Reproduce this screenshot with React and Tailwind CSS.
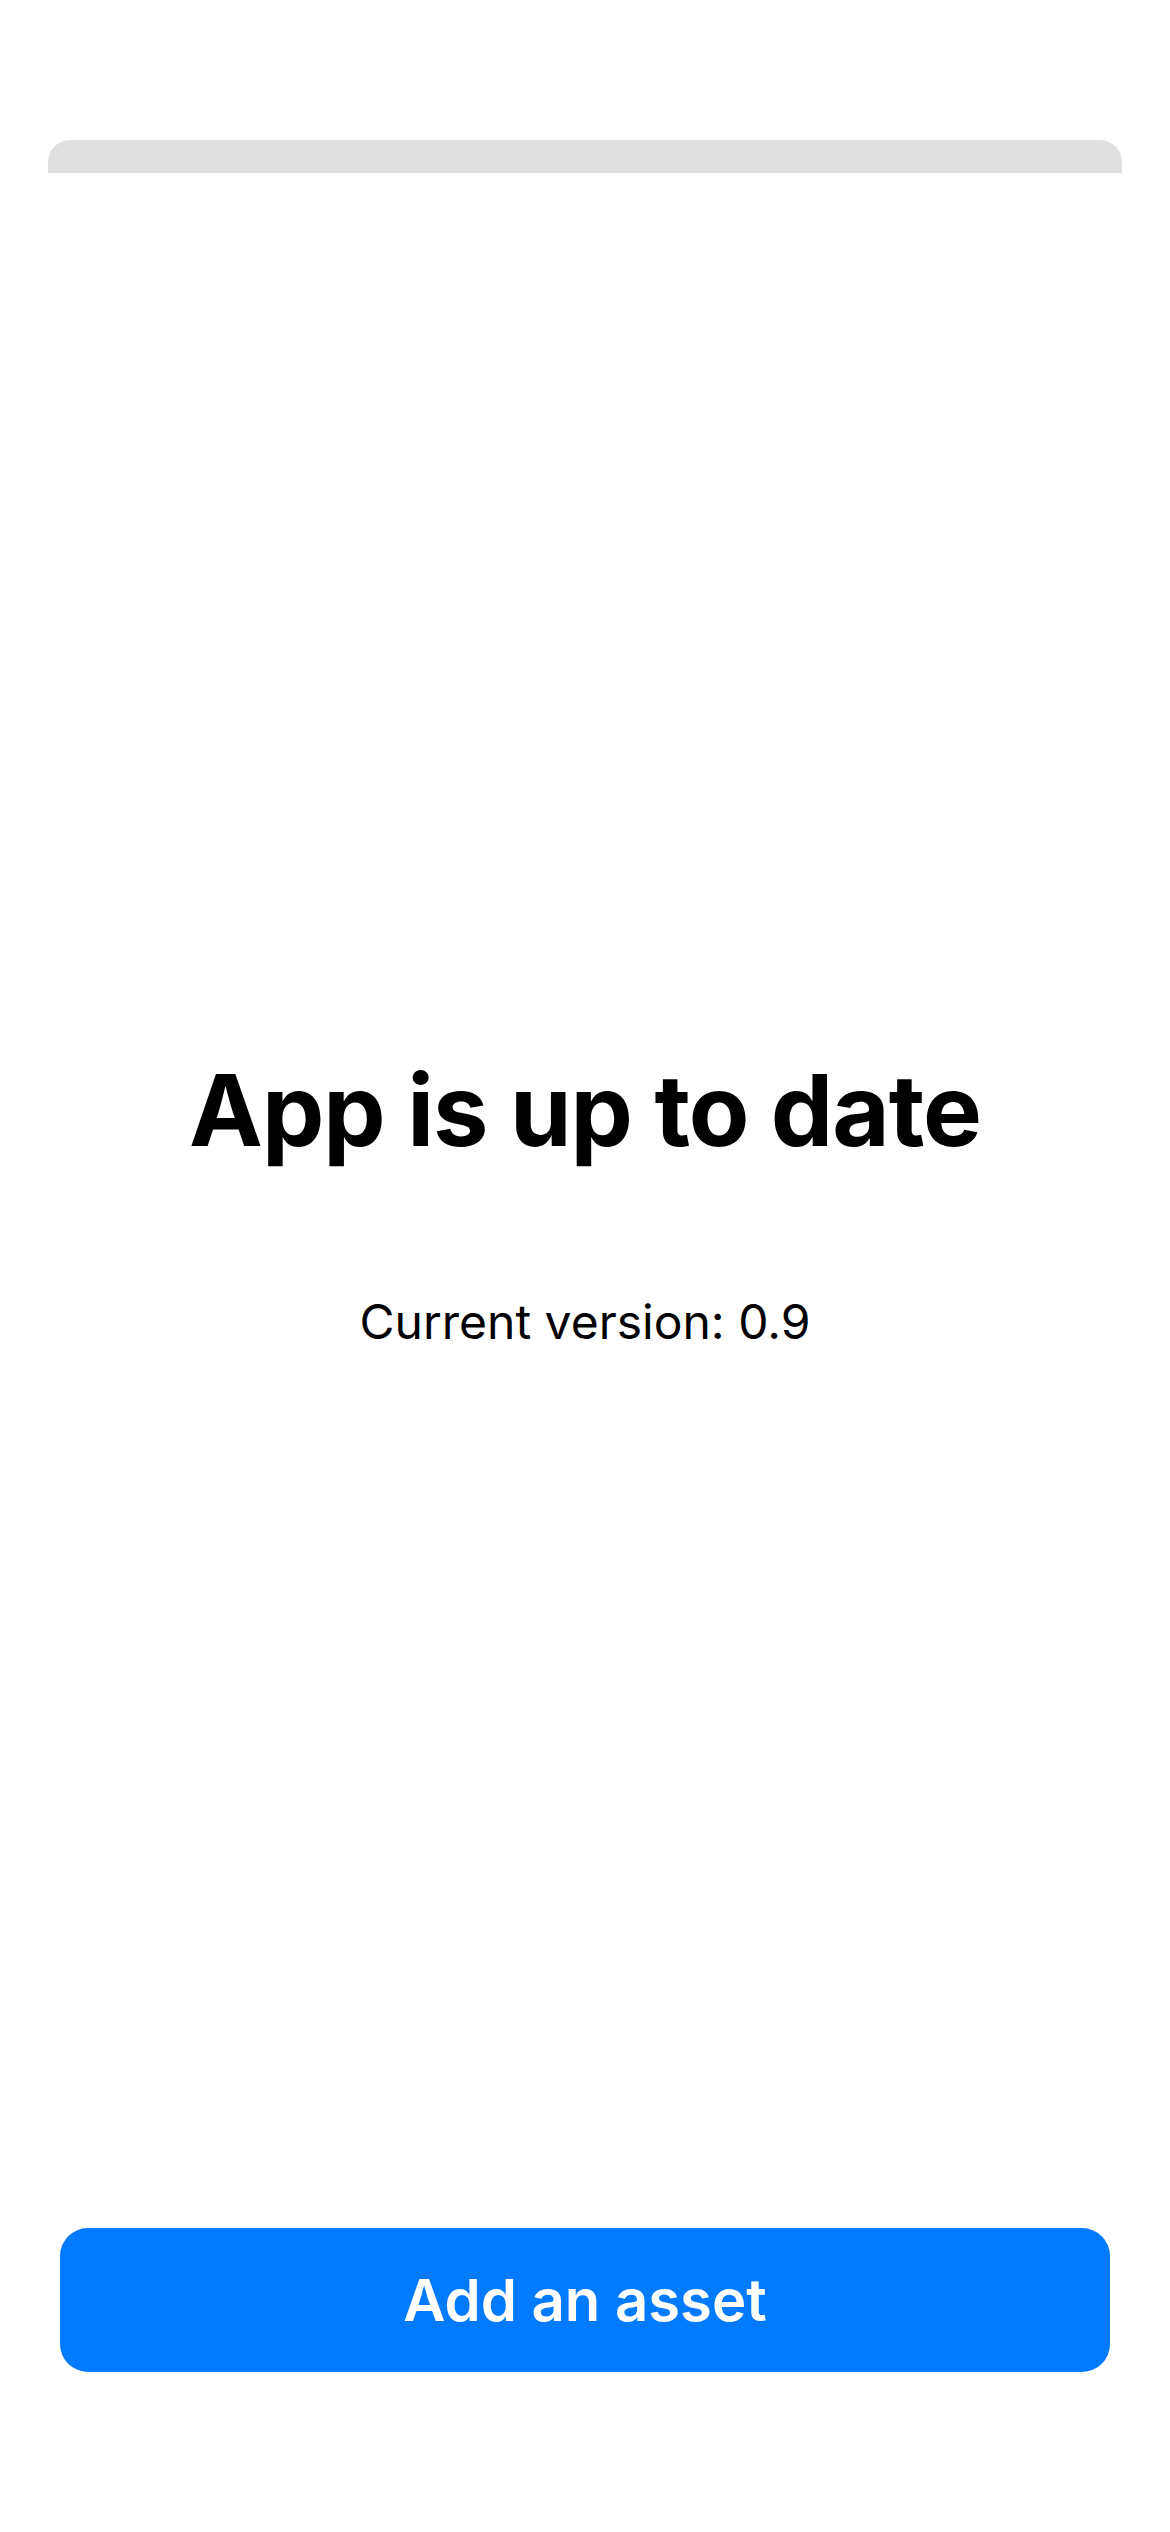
export default function App() {
  return (
    <div className="w-[1170px] h-[2532px] bg-white flex flex-col font-['Inter','Noto_Sans',sans-serif] text-black">
      {/* Peeking sheet edge */}
      <div className="mt-[140px] mx-[48px] h-[33px] bg-[#e0e0e0] rounded-t-[22px]" />

      {/* Status */}
      <h1 className="mt-[888px] text-center text-[99px] leading-none font-bold tracking-[-1px]">
        App is up to date
      </h1>
      <p className="mt-[138px] text-center text-[48px] leading-none font-normal">Current version: 0.9</p>

      {/* Action */}
      <button className="mt-auto mb-[160px] mx-[60px] h-[144px] rounded-[28px] bg-[#007aff] text-white text-[58px] font-semibold leading-none">
        Add an asset
      </button>
    </div>
  );
}
